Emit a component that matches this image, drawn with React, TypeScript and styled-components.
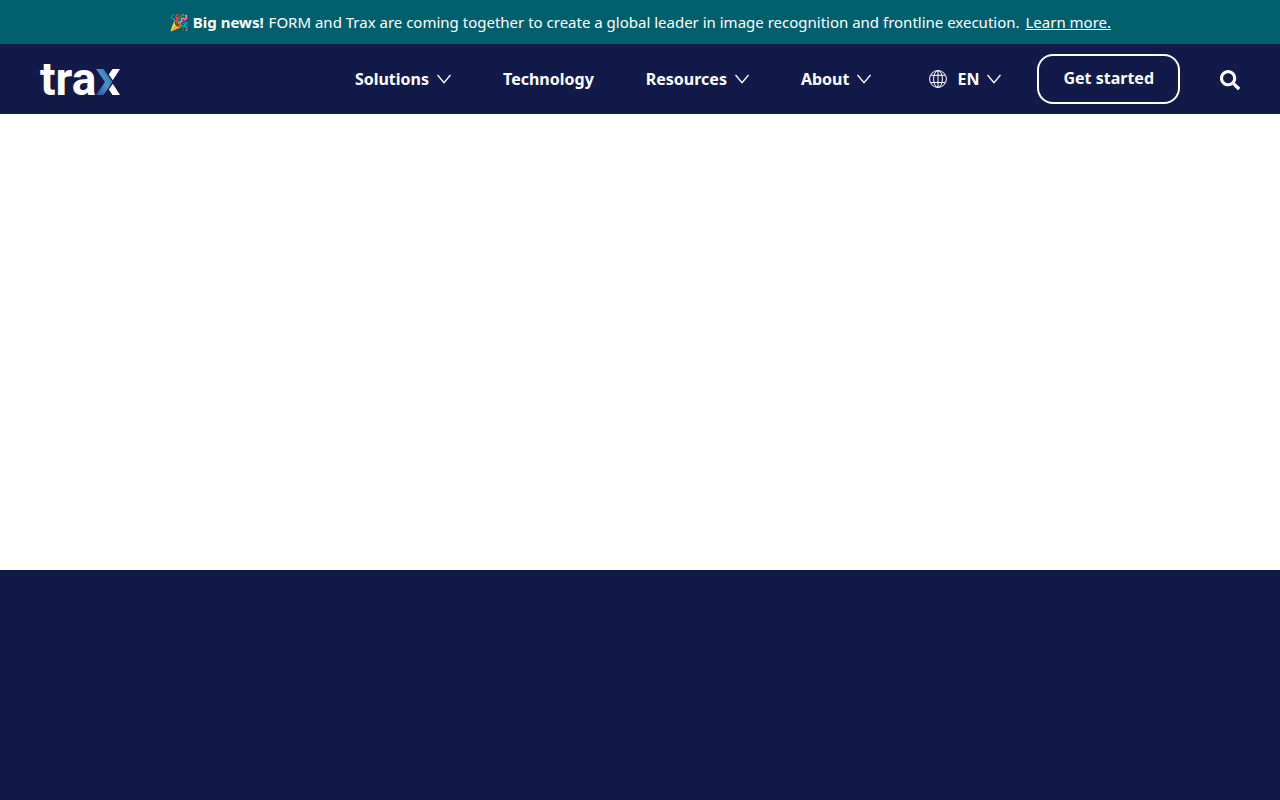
import React from "react";
import styled, { createGlobalStyle } from "styled-components";
import { FaSearch } from "react-icons/fa";

const GlobalStyle = createGlobalStyle`
  *, *::before, *::after { box-sizing: border-box; }
  body {
    margin: 0;
    background: #ffffff;
    font-family: "Noto Sans", "Open Sans", sans-serif;
    color: #ffffff;
  }
`;

const Page = styled.div`
  display: flex;
  flex-direction: column;
  min-height: 100vh;
`;

const Banner = styled.div`
  padding: 10px 20px;
  background: #005f6c;
  text-align: center;
  font-size: 15px;
  line-height: 24px;
`;

const BannerEmoji = styled.span`
  font-size: 16px;
  line-height: 1;
`;

const BannerTitle = styled.strong`
  margin-right: 1px;
`;

const BannerLink = styled.a`
  margin-left: 2px;
  color: inherit;
  text-decoration: underline;
`;

const Header = styled.header`
  display: flex;
  align-items: center;
  min-height: 70px;
  padding: 0 40px;
  background: #121a4a;
`;

const LogoLink = styled.a`
  display: block;
  margin-right: auto;
  color: #ffffff;
  text-decoration: none;
`;

const LogoArt = styled.svg`
  display: block;
  width: 80px;
  height: 32px;
  overflow: visible;
  font-family: Roboto, "Liberation Sans", sans-serif;
  font-size: 46px;
  font-weight: 700;
`;

const Nav = styled.nav`
  display: flex;
  align-items: center;
  gap: 52px;
`;

const navText = `
  color: #ffffff;
  font-family: inherit;
  font-size: 16px;
  font-weight: 700;
  line-height: 24px;
`;

const NavLink = styled.a`
  ${navText}
  text-decoration: none;
`;

const NavButton = styled.button`
  ${navText}
  display: flex;
  align-items: center;
  gap: 8px;
  padding: 0;
  border: 0;
  background: none;
  cursor: pointer;
`;

const LanguageButton = styled(NavButton)`
  margin-left: 58px;
`;

const LanguageCode = styled.span`
  padding-left: 2px;
`;

const StartLink = styled.a`
  ${navText}
  margin-left: 36px;
  padding: 10px 24px 12px;
  border: 2px solid #ffffff;
  border-radius: 16px;
  text-decoration: none;
`;

const SearchButton = styled.button`
  display: flex;
  margin-left: 40px;
  padding: 2px 0 0;
  border: 0;
  background: none;
  color: #ffffff;
  font-size: 20px;
  cursor: pointer;
`;

const Hero = styled.main`
  flex: 1 0 auto;
  background: #ffffff;
`;

const Footer = styled.footer`
  min-height: 230px;
  background: #121a4a;
`;

const Chevron = () => (
  <svg width="14" height="10" viewBox="0 0 14 10" fill="none" aria-hidden="true">
    <path d="M0.5 1L7 8.7L13.5 1" stroke="currentColor" strokeWidth="1.3" />
  </svg>
);

const Globe = () => (
  <svg width="18" height="18" viewBox="0 0 18 18" fill="none" stroke="currentColor" aria-hidden="true">
    <circle cx="9" cy="9" r="8.4" />
    <ellipse cx="9" cy="9" rx="4.4" ry="8.4" />
    <path d="M9 0.6V17.4M1.8 5.3H16.2M1.8 12.5H16.2" />
  </svg>
);

const Logo = () => (
  <LogoArt viewBox="0 0 80 32" role="img" aria-label="trax">
    <defs>
      <linearGradient id="arrow" x1="0" y1="1" x2="1" y2="0">
        <stop offset="0" stopColor="#24508f" />
        <stop offset="0.5" stopColor="#4a94d0" />
        <stop offset="1" stopColor="#2f67a6" />
      </linearGradient>
    </defs>
    <text x="0" y="32" fill="currentColor">tra</text>
    <path d="M80 6H72.5L68.8 11.5L72.8 17.2ZM80 32H72.5L68.8 26.5L72.8 20.8Z" fill="currentColor" />
    <path d="M56 6H63.5L72.4 19L63.5 32H56L65 19Z" fill="url(#arrow)" />
  </LogoArt>
);

const menus = [
  { label: "Solutions", expands: true },
  { label: "Technology", expands: false },
  { label: "Resources", expands: true },
  { label: "About", expands: true },
];

export default function App() {
  return (
    <Page>
      <GlobalStyle />
      <Banner>
        <BannerEmoji>🎉</BannerEmoji> <BannerTitle>Big news!</BannerTitle> FORM and Trax are coming together to
        create a global leader in image recognition and frontline execution.{" "}
        <BannerLink href="#news">Learn more.</BannerLink>
      </Banner>
      <Header>
        <LogoLink href="#home">
          <Logo />
        </LogoLink>
        <Nav aria-label="Main">
          {menus.map(({ label, expands }) =>
            expands ? (
              <NavButton key={label} type="button">
                {label}
                <Chevron />
              </NavButton>
            ) : (
              <NavLink key={label} href="#technology">
                {label}
              </NavLink>
            )
          )}
        </Nav>
        <LanguageButton type="button">
          <Globe />
          <LanguageCode>EN</LanguageCode>
          <Chevron />
        </LanguageButton>
        <StartLink href="#start">Get started</StartLink>
        <SearchButton type="button" aria-label="Search">
          <FaSearch />
        </SearchButton>
      </Header>
      <Hero />
      <Footer />
    </Page>
  );
}
